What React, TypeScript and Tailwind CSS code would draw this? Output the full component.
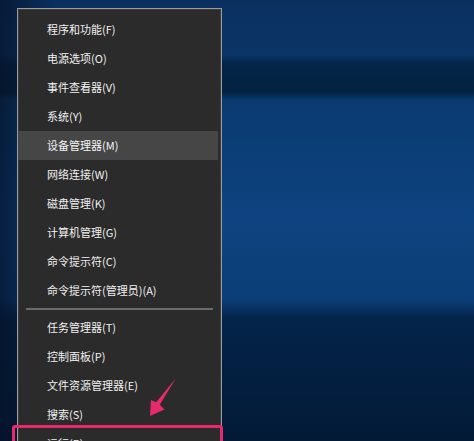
import React from 'react';

type Item = { label: string; active?: boolean };

const groupA: Item[] = [
  { label: '程序和功能(F)' },
  { label: '电源选项(O)' },
  { label: '事件查看器(V)' },
  { label: '系统(Y)' },
  { label: '设备管理器(M)', active: true },
  { label: '网络连接(W)' },
  { label: '磁盘管理(K)' },
  { label: '计算机管理(G)' },
  { label: '命令提示符(C)' },
  { label: '命令提示符(管理员)(A)' },
];

const groupB: Item[] = [
  { label: '任务管理器(T)' },
  { label: '控制面板(P)' },
  { label: '文件资源管理器(E)' },
  { label: '搜索(S)' },
  { label: '运行(R)' },
];

function MenuItem({ label, active }: Item) {
  return (
    <div
      className={
        active
          ? 'flex h-[29px] items-center mr-[3px] pl-[29px] bg-[#464646] text-[11px] text-[#f4f4f4]'
          : 'flex h-[29px] items-center mr-[3px] pl-[29px] text-[11px] text-[#f0f0f0]'
      }
    >
      {label}
    </div>
  );
}

export default function App() {
  return (
    <div
      className="relative h-[441px] w-[474px] overflow-hidden bg-[linear-gradient(90deg,rgba(6,18,40,0.75)_0%,rgba(6,18,40,0)_12%),linear-gradient(180deg,#0a3060_0px,#0b3566_55px,#04254a_63px,#03223f_92px,#0a3a70_100px,#0d4380_220px,#0b3e76_300px,#04244a_318px,#021a36_441px)]"
      style={{ fontFamily: '"Noto Sans CJK SC", "Noto Sans", sans-serif' }}
    >
      <div className="pl-[17px] pt-[8px]">
        <div className="w-[205px] border border-[#9a9ca0] bg-[#2b2b2b] pt-[6px] shadow-[inset_0_0_0_1px_#3c3c3c] pb-4">
          {groupA.map((it) => (
            <MenuItem key={it.label} {...it} />
          ))}
          <div className="flex h-[8px] items-center">
            <div className="ml-[8px] mr-[8px] h-[2px] flex-1 bg-[#6b6b6b]" />
          </div>
          {groupB.map((it) => (
            <MenuItem key={it.label} {...it} />
          ))}
        </div>
      </div>

      {/* annotation box around 运行 */}
      <div className="absolute left-[12px] top-[425px] h-[40px] w-[211px] rounded-[3px] border-[3px] border-[#e8296b]" />

      {/* annotation arrow */}
      <svg
        className="pointer-events-none absolute left-0 top-0"
        width="474"
        height="441"
        viewBox="0 0 474 441"
      >
        <polygon
          points="176,378 159.8,404.8 164.5,409.5 150,416 151,400 156.2,402.2"
          fill="#e8296b"
        />
      </svg>
    </div>
  );
}
